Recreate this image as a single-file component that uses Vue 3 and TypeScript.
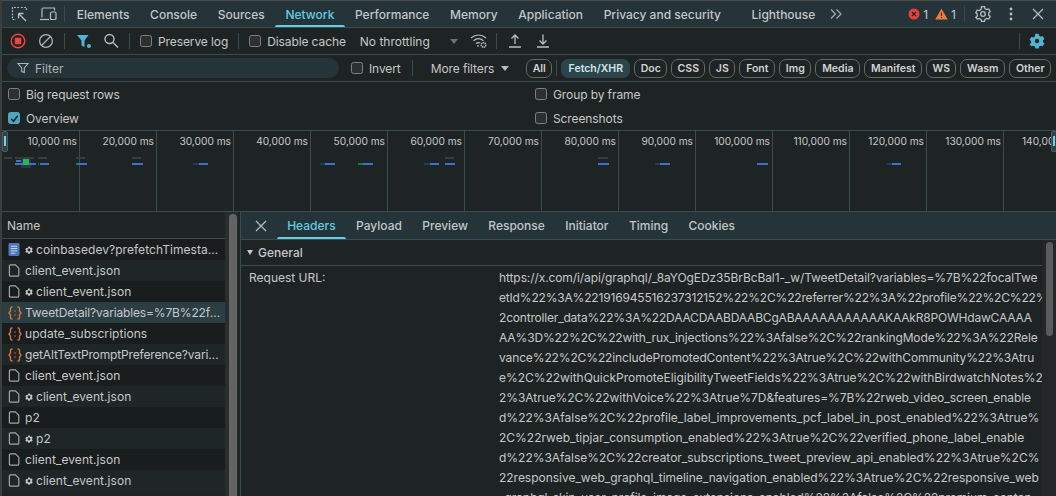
<script setup lang="ts">
const tabs = ['Elements', 'Console', 'Sources', 'Network', 'Performance', 'Memory', 'Application', 'Privacy and security', 'Lighthouse']
const chips: { label: string; w: number }[] = [
  { label: 'Fetch/XHR', w: 69 }, { label: 'Doc', w: 33 }, { label: 'CSS', w: 34 }, { label: 'JS', w: 26 },
  { label: 'Font', w: 36 }, { label: 'Img', w: 32 }, { label: 'Media', w: 45 }, { label: 'Manifest', w: 58 },
  { label: 'WS', w: 30 }, { label: 'Wasm', w: 45 }, { label: 'Other', w: 42 },
]
const ticks = ['10,000 ms', '20,000 ms', '30,000 ms', '40,000 ms', '50,000 ms', '60,000 ms', '70,000 ms', '80,000 ms', '90,000 ms', '100,000 ms', '110,000 ms', '120,000 ms', '130,000 ms', '140,000 ms']

interface Bar { x: number; y: number; w: number; h: number; c: string }
const blue = '#3f6fd0'
const navy = '#25395f'
const gray = '#3a3d3e'
const green = '#1c7a3c'
const bars: Bar[] = [
  { x: 21, y: 157, w: 10, h: 11, c: '#2f3a3c' },
  { x: 4, y: 157, w: 8, h: 2, c: gray }, { x: 15, y: 157, w: 6, h: 2, c: gray }, { x: 24, y: 157, w: 10, h: 2, c: gray }, { x: 38, y: 157, w: 9, h: 2, c: gray },
  { x: 76, y: 157, w: 9, h: 2, c: gray }, { x: 132, y: 157, w: 9, h: 2, c: gray }, { x: 445, y: 157, w: 9, h: 2, c: gray }, { x: 598, y: 157, w: 10, h: 2, c: gray },
  { x: 16, y: 160, w: 5, h: 2, c: blue }, { x: 15, y: 163, w: 21, h: 2, c: blue }, { x: 23, y: 159, w: 6, h: 6, c: '#28b45a' },
  { x: 38, y: 163, w: 1, h: 2, c: green }, { x: 40, y: 163, w: 9, h: 2, c: blue },
  { x: 76, y: 163, w: 2, h: 2, c: green }, { x: 78, y: 163, w: 9, h: 2, c: blue },
  { x: 132, y: 163, w: 11, h: 2, c: blue },
  { x: 193, y: 163, w: 6, h: 2, c: navy }, { x: 199, y: 163, w: 9, h: 2, c: blue },
  { x: 320, y: 163, w: 5, h: 2, c: navy }, { x: 325, y: 163, w: 10, h: 2, c: blue },
  { x: 358, y: 163, w: 5, h: 2, c: green }, { x: 363, y: 163, w: 10, h: 2, c: blue },
  { x: 424, y: 163, w: 6, h: 2, c: navy }, { x: 430, y: 163, w: 9, h: 2, c: blue }, { x: 445, y: 163, w: 10, h: 2, c: blue },
  { x: 598, y: 163, w: 11, h: 2, c: blue },
  { x: 655, y: 163, w: 5, h: 2, c: navy }, { x: 660, y: 163, w: 10, h: 2, c: blue },
  { x: 757, y: 163, w: 11, h: 2, c: blue },
  { x: 886, y: 163, w: 6, h: 2, c: navy }, { x: 892, y: 163, w: 9, h: 2, c: blue },
]

type Kind = 'doc' | 'file' | 'json'
interface Row { kind: Kind; gear: boolean; name: string; sel?: boolean; tight?: boolean }
const rows: Row[] = [
  { kind: 'doc', gear: true, name: 'coinbasedev?prefetchTimestamp=17' },
  { kind: 'file', gear: false, name: 'client_event.json' },
  { kind: 'file', gear: true, name: 'client_event.json' },
  { kind: 'json', gear: false, name: 'TweetDetail?variables=%7B%22focalTweetId', sel: true, tight: true },
  { kind: 'json', gear: false, name: 'update_subscriptions' },
  { kind: 'json', gear: false, name: 'getAltTextPromptPreference?variables=%7B', tight: true },
  { kind: 'file', gear: false, name: 'client_event.json' },
  { kind: 'file', gear: true, name: 'client_event.json' },
  { kind: 'file', gear: false, name: 'p2' },
  { kind: 'file', gear: true, name: 'p2' },
  { kind: 'file', gear: false, name: 'client_event.json' },
  { kind: 'file', gear: true, name: 'client_event.json' },
]

const subTabs = ['Headers', 'Payload', 'Preview', 'Response', 'Initiator', 'Timing', 'Cookies']

const urlLines: { text: string; ls: number }[] = [
  { text: 'https://x.com/i/api/graphql/_8aYOgEDz35BrBcBal1-_w/TweetDetail?variables=%7B%22focalTwe', ls: -0.094 },
  { text: 'etId%22%3A%221916945516237312152%22%2C%22referrer%22%3A%22profile%22%2C%22%2', ls: -0.177 },
  { text: '2controller_data%22%3A%22DAACDAABDAABCgABAAAAAAAAAAAKAAkR8POWHdawCAAAA', ls: -0.19 },
  { text: 'AA%3D%22%2C%22with_rux_injections%22%3Afalse%2C%22rankingMode%22%3A%22Rele', ls: -0.127 },
  { text: 'vance%22%2C%22includePromotedContent%22%3Atrue%2C%22withCommunity%22%3Atru', ls: -0.127 },
  { text: 'e%2C%22withQuickPromoteEligibilityTweetFields%22%3Atrue%2C%22withBirdwatchNotes%2', ls: -0.035 },
  { text: '2%3Atrue%2C%22withVoice%22%3Atrue%7D&features=%7B%22rweb_video_screen_enable', ls: -0.06 },
  { text: 'd%22%3Afalse%2C%22profile_label_improvements_pcf_label_in_post_enabled%22%3Atrue%', ls: 0 },
  { text: '2C%22rweb_tipjar_consumption_enabled%22%3Atrue%2C%22verified_phone_label_enable', ls: -0.01 },
  { text: 'd%22%3Afalse%2C%22creator_subscriptions_tweet_preview_api_enabled%22%3Atrue%2C%', ls: -0.02 },
  { text: '22responsive_web_graphql_timeline_navigation_enabled%22%3Atrue%2C%22responsive_web', ls: -0.024 },
  { text: '_graphql_skip_user_profile_image_extensions_enabled%22%3Afalse%2C%22premium_conten', ls: -0.06 },
]
</script>

<template>
  <div class="app">
    <!-- main tab bar -->
    <header class="tabbar">
      <svg class="ic i-inspect" width="18" height="18" viewBox="0 0 18 18" fill="none" stroke="#b9bdbe" stroke-width="1.2">
        <path d="M9 2.500H2.500V14.500H6" stroke-dasharray="1.800 1.300"/>
        <path d="M11 2.500H16.500V6" stroke-dasharray="1.800 1.300"/>
        <path d="M8.500 8.500l7.500 7.500M8.500 8.500h5M8.500 8.500v5" stroke-width="1.300"/>
      </svg>
      <svg class="ic i-device" width="18" height="18" viewBox="0 0 18 18" fill="none" stroke="#b9bdbe" stroke-width="1.200">
        <path d="M3 12.500V4.200A1.200 1.200 0 0 1 4.200 3H15.500V5.500"/>
        <path d="M1 14.500h9"/>
        <rect x="11.500" y="7" width="5.500" height="7.500" rx="1"/>
      </svg>
      <i class="sep top-sep"></i>
      <nav class="tabs">
        <a v-for="t in tabs" :key="t" class="tab" :class="{ active: t === 'Network', last: t === 'Lighthouse' }">{{ t }}</a>
      </nav>
      <svg class="more" width="14" height="12" viewBox="0 0 14 12" fill="none" stroke="#a9adae" stroke-width="1.200"><path d="M2 1.500L6.500 6 2 10.500M7.500 1.500L12 6l-4.500 4.500"/></svg>
      <div class="counts">
        <svg width="12" height="12" viewBox="0 0 12 12"><circle cx="6" cy="6" r="5.500" fill="#e5403a"/><path d="M4 4l4 4M8 4l-4 4" stroke="#3a1513" stroke-width="1.300"/></svg>
        <span class="cnt">1</span>
        <svg class="warn" width="13" height="12" viewBox="0 0 13 12"><path d="M6.500.8L12.800 11.500H.2z" fill="#ee7b3c"/><path d="M6.500 4.500v3.500M6.500 9v1" stroke="#4a2410" stroke-width="1.100"/></svg>
        <span class="cnt">1</span>
      </div>
      <i class="sep end-sep"></i>
      <svg class="ic" width="18" height="18" viewBox="0 0 18 18" fill="none" stroke="#b9bdbe" stroke-width="1.300"><path d="M7.500 2h3l.5 2 1.700 1 2-.6 1.500 2.600-1.500 1.400v2l1.500 1.400-1.500 2.600-2-.6-1.700 1-.5 2h-3l-.5-2-1.700-1-2 .6L1.800 12.800l1.500-1.400v-2L1.800 8l1.500-2.600 2 .6L7 5z" transform="translate(0 -.4)"/><circle cx="9" cy="9" r="2.300"/></svg>
      <svg class="dots" width="4" height="14" viewBox="0 0 4 14" fill="#b9bdbe"><circle cx="2" cy="2" r="1.400"/><circle cx="2" cy="7" r="1.400"/><circle cx="2" cy="12" r="1.400"/></svg>
      <svg class="close" width="12" height="12" viewBox="0 0 12 12" stroke="#b9bdbe" stroke-width="1.200"><path d="M1 1l10 10M11 1L1 11"/></svg>
    </header>

    <!-- action toolbar -->
    <section class="toolbar">
      <svg class="t-rec" width="16" height="16" viewBox="0 0 16 16"><circle cx="8" cy="8" r="6.800" fill="none" stroke="#ee4540" stroke-width="1.400"/><rect x="4.800" y="4.800" width="6.400" height="6.400" rx="1" fill="#ee4540"/></svg>
      <svg class="t-clear" width="16" height="16" viewBox="0 0 16 16" fill="none" stroke="#b0b4b5" stroke-width="1.300"><circle cx="8" cy="8" r="6.400"/><path d="M3.500 12.500l9-9"/></svg>
      <i class="sep s1"></i>
      <svg class="t-filter" width="16" height="16" viewBox="0 0 16 16"><path d="M1 2h11.500L8.500 7.500V14L5.500 12.500V7.500z" fill="#4fb6d0"/><circle cx="13" cy="13" r="2" fill="#4fb6d0"/></svg>
      <svg class="t-search" width="16" height="16" viewBox="0 0 16 16" fill="none" stroke="#b9bdbe" stroke-width="1.400"><circle cx="6.500" cy="6" r="4.500"/><path d="M10 9.500l5 5"/></svg>
      <i class="sep s2"></i>
      <label class="check c-pres"><span class="box"></span>Preserve log</label>
      <i class="sep s3"></i>
      <label class="check c-dis"><span class="box"></span>Disable cache</label>
      <span class="throttle">No throttling</span>
      <i class="caret dim"></i>
      <svg class="t-wifi" width="18" height="16" viewBox="0 0 18 16" fill="none" stroke="#b9bdbe" stroke-width="1.200"><path d="M1 5c4.500-4 10.500-4 15 0M3.500 7.800c3-2.600 7-2.600 10 0M6 10.500c1.500-1.200 3-1.200 4.200-.4"/><circle cx="8" cy="12.800" r=".9" fill="#b9bdbe" stroke="none"/><circle cx="13.500" cy="12" r="2.300" stroke-width="1.400" stroke-dasharray="1.300 .5"/></svg>
      <i class="sep s4"></i>
      <svg class="t-up" width="16" height="16" viewBox="0 0 16 16" fill="none" stroke="#b9bdbe" stroke-width="1.300"><path d="M8 11V2M4.500 5.500L8 2l3.500 3.500M2 14h12"/></svg>
      <svg class="t-down" width="16" height="16" viewBox="0 0 16 16" fill="none" stroke="#b9bdbe" stroke-width="1.300"><path d="M8 1.500V11M4.500 7.500L8 11l3.500-3.500M2 14h12"/></svg>
      <i class="sep s5"></i>
      <svg class="t-gear" width="16" height="16" viewBox="0 0 16 16"><path fill="#4fb6d0" fill-rule="evenodd" d="M6.300.8h3.400l.4 2 1.600.9 2-.6 1.700 2.900-1.500 1.300v1.800l1.500 1.300-1.700 2.900-2-.6-1.600.9-.4 2H6.300l-.4-2-1.600-.9-2 .6L.6 11.200l1.500-1.300V8.100L.6 6.800l1.700-2.900 2 .6 1.600-.9zM8 5.800a2.200 2.200 0 1 0 0 4.400 2.200 2.200 0 0 0 0-4.400z"/></svg>
    </section>

    <!-- filter row -->
    <section class="filterbar">
      <div class="filter-input">
        <svg width="12" height="12" viewBox="0 0 12 12" fill="none" stroke="#b0b4b5" stroke-width="1.100"><path d="M1 1.500h10L7.300 6v4.500L4.700 9.500V6z"/></svg>
        <span>Filter</span>
      </div>
      <label class="check c-inv"><span class="box"></span>Invert</label>
      <i class="sep s6"></i>
      <span class="morefilters">More filters</span>
      <i class="caret"></i>
      <span class="chip chip-all">All</span>
      <i class="sep s7"></i>
      <span v-for="c in chips" :key="c.label" class="chip" :class="{ on: c.label === 'Fetch/XHR' }" :style="{ width: c.w + 'px' }">{{ c.label }}</span>
    </section>

    <!-- options -->
    <section class="options">
      <label class="check"><span class="box"></span>Big request rows</label>
      <label class="check"><span class="box"></span>Group by frame</label>
      <label class="check"><span class="box checked"><svg width="11" height="11" viewBox="0 0 11 11" fill="none" stroke="#12262c" stroke-width="1.600"><path d="M2.200 5.800l2.300 2.400 4.300-5.400"/></svg></span>Overview</label>
      <label class="check"><span class="box"></span>Screenshots</label>
    </section>

    <!-- overview timeline -->
    <section class="overview">
      <div v-for="t in ticks" :key="t" class="tick"><span>{{ t }}</span></div>
      <i v-for="(b, i) in bars" :key="i" class="bar" :style="{ left: b.x + 'px', top: (b.y - 131) + 'px', width: b.w + 'px', height: b.h + 'px', background: b.c }"></i>
      <i class="handle h-left"></i>
      <i class="handle h-right"></i>
    </section>

    <!-- split -->
    <section class="split">
      <div class="list">
        <div class="list-main">
          <div class="list-head">Name</div>
          <div v-for="(r, i) in rows" :key="i" class="row" :class="{ alt: i % 2 === 1, sel: r.sel, tight: r.tight }">
            <svg v-if="r.kind === 'doc'" class="ricon" width="12" height="13" viewBox="0 0 13 14"><rect x=".5" y="0" width="12" height="14" rx="1.500" fill="#4d74bd"/><path d="M3 3.500h7M3 6h7M3 8.500h7M3 11h5" stroke="#d3e0f5" stroke-width="1"/></svg>
            <svg v-else-if="r.kind === 'file'" class="ricon" width="12" height="13" viewBox="0 0 13 14" fill="none" stroke="#a2a6a7" stroke-width="1.300"><path d="M1.500 2A1.200 1.200 0 0 1 2.700.8H8L11.700 4.500V12a1.200 1.200 0 0 1-1.200 1.200H2.700A1.200 1.200 0 0 1 1.500 12z"/></svg>
            <svg v-else class="ricon json" width="14" height="14" viewBox="0 0 14 14" fill="none" stroke="#e0743e" stroke-width="1.300"><path d="M4.500 1H3.800A1.300 1.300 0 0 0 2.500 2.300V5L1 7l1.500 2v2.700A1.300 1.300 0 0 0 3.800 13h.7M9.500 1h.7a1.300 1.300 0 0 1 1.300 1.300V5L13 7l-1.500 2v2.700a1.300 1.300 0 0 1-1.300 1.300h-.7"/><path d="M7 4.500v1M7 8.500v1" stroke-width="1.500"/></svg>
            <svg v-if="r.gear" class="rgear" width="8" height="8" viewBox="0 0 16 16"><path fill="#c4c8c9" fill-rule="evenodd" d="M6.300.8h3.400l.4 2 1.600.9 2-.6 1.700 2.900-1.500 1.300v1.800l1.500 1.300-1.700 2.900-2-.6-1.600.9-.4 2H6.300l-.4-2-1.600-.9-2 .6L.6 11.200l1.500-1.300V8.100L.6 6.800l1.700-2.900 2 .6 1.600-.9zM8 5.200a2.800 2.800 0 1 0 0 5.600 2.800 2.800 0 0 0 0-5.600z"/></svg>
            <span class="rname">{{ r.name }}</span>
          </div>
        </div>
        <div class="vscroll"><i></i></div>
      </div>

      <div class="detail">
        <nav class="subtabs">
          <svg class="subclose" width="12" height="12" viewBox="0 0 12 12" stroke="#b9bdbe" stroke-width="1.200"><path d="M1 1l10 10M11 1L1 11"/></svg>
          <a v-for="s in subTabs" :key="s" class="subtab" :class="{ active: s === 'Headers' }">{{ s }}</a>
        </nav>
        <div class="detail-body">
          <div class="detail-main">
            <div class="section-head"><i class="tri"></i>General</div>
            <div class="kv">
              <span class="key">Request URL:</span>
              <div class="val">
                <div v-for="(l, i) in urlLines" :key="i" class="line" :style="{ letterSpacing: l.ls + 'px' }">{{ l.text }}</div>
              </div>
            </div>
          </div>
          <div class="dscroll"><i></i></div>
        </div>
      </div>
    </section>
  </div>
</template>

<style scoped>
.app {
  width: 1056px;
  height: 496px;
  overflow: hidden;
  background: #1e2324;
  color: #c6c8c9;
  font-family: Inter, "Liberation Sans", sans-serif;
  font-size: 12px;
  border-left: 2px solid #3b3e3f;
  border-top: 1px solid #4a4c4d;
  box-sizing: border-box;
  display: flex;
  flex-direction: column;
}
svg { display: block; flex: none; }
.sep { display: block; width: 1px; height: 16px; background: #3c4a4e; flex: none; }

.tabbar {
  flex: none;
  background: #243439;
  border-bottom: 1px solid #3b4c51;
  display: flex;
  align-items: center;
  height: 26px;
  padding-left: 8px;
}
.i-device { margin-left: 11px; }
.top-sep { margin-left: 7px; }
.tabs { display: flex; height: 100%; margin-left: 1.500px; }
.tab {
  display: flex;
  align-items: center;
  justify-content: center;
  padding: 0 10.300px;
  font-weight: 500;
  white-space: nowrap;
  color: #c2c6c7;
  position: relative;
}
.tab.last { margin-left: 10px; }
.tab.active { color: #62cde3; }
.tab.active::after {
  content: '';
  position: absolute;
  left: 0;
  right: 0;
  bottom: 0;
  height: 2px;
  border-radius: 2px 2px 0 0;
  background: #62cde3;
}
.more { margin-left: 3px; }
.counts { margin-left: auto; display: flex; align-items: center; }
.cnt { margin-left: 3px; }
.warn { margin-left: 7px; }
.end-sep { margin-left: 8px; }
.end-sep + svg { margin-left: 9px; }
.dots { margin-left: 17px; }
.close { margin-left: 19px; margin-right: 12px; }

.toolbar {
  flex: none;
  height: 26px;
  border-bottom: 1px solid #3b4c51;
  display: flex;
  align-items: center;
  padding-left: 8px;
}
.t-clear { margin-left: 12px; }
.s1 { margin-left: 10px; }
.t-filter { margin-left: 11px; }
.t-search { margin-left: 11px; }
.s2 { margin-left: 10px; }
.c-pres { margin-left: 10px; }
.s3 { margin-left: 10px; }
.c-dis { margin-left: 10px; }
.throttle { margin-left: 14px; white-space: nowrap; }
.caret { display: block; flex: none; width: 0; height: 0; border: 4px solid transparent; border-top: 5px solid #b9bdbe; border-bottom: 0; }
.caret.dim { border-top-color: #6d7273; margin-left: 20px; }
.t-wifi { margin-left: 12px; }
.s4 { margin-left: 8px; }
.t-up { margin-left: 10px; }
.t-down { margin-left: 12px; }
.s5 { margin-left: auto; }
.t-gear { margin-left: 9px; margin-right: 11px; }

.check { display: flex; align-items: center; gap: 6px; white-space: nowrap; letter-spacing: -.1px; }
.box {
  width: 10px;
  height: 10px;
  border: 1px solid #7d8182;
  border-radius: 2.500px;
  background: #2d2f30;
  flex: none;
  display: flex;
  align-items: center;
  justify-content: center;
}
.box.checked { background: #4ca7bf; border-color: #4ca7bf; }

.filterbar {
  flex: none;
  height: 26px;
  border-bottom: 1px solid #3b4c51;
  display: flex;
  align-items: center;
  padding-left: 5px;
}
.filter-input {
  width: 332px;
  height: 20px;
  border-radius: 10px;
  background: #243439;
  display: flex;
  align-items: center;
  gap: 6px;
  padding-left: 10px;
  box-sizing: border-box;
  color: #aeb2b3;
  flex: none;
}
.c-inv { margin-left: 12px; }
.s6 { margin-left: 11px; }
.morefilters { margin-left: 18px; white-space: nowrap; letter-spacing: -.1px; }
.filterbar .caret { margin-left: 7px; }
.chip {
  height: 19px;
  border: 1px solid #63696b;
  border-radius: 7px;
  box-sizing: border-box;
  display: flex;
  align-items: center;
  justify-content: center;
  font-size: 10.500px;
  font-weight: 600;
  margin-left: 4px;
  color: #d0d3d4;
  flex: none;
}
.chip-all { margin-left: 17px; width: 26px; }
.s7 { margin-left: 4px; }
.chip.on { background: #2c454c; border-color: #2c454c; color: #d3e6ea; }

.options {
  flex: none;
  height: 48px;
  display: grid;
  grid-template-columns: 527px 1fr;
  grid-auto-rows: 24px;
  padding-left: 6px;
  align-items: center;
}

.overview {
  flex: none;
  height: 80px;
  border-top: 1px solid #3b4c51;
  border-bottom: 1px solid #3b4c51;
  display: flex;
  position: relative;
  overflow: hidden;
  padding-left: 1px;
}
.tick {
  flex: none;
  width: 77px;
  box-sizing: border-box;
  border-right: 1px solid #3b4c51;
  display: flex;
  justify-content: flex-end;
  padding: 4px 2px 0 0;
  font-size: 10.200px;
  white-space: nowrap;
}
.tick span { display: block; }
.bar { position: absolute; display: block; margin-left: -2px; }
.handle {
  position: absolute;
  top: 0;
  width: 4px;
  height: 19px;
  background: #2e4248;
  border: 1px solid #4a5d62;
  border-radius: 2px;
  display: block;
}
.h-left { left: 0; }
.h-right { right: -1px; }
.handle::after { content: ''; position: absolute; left: 1px; top: 4px; width: 1.500px; height: 10px; background: #6fd6ea; }

.split { flex: 1; min-height: 0; display: flex; }
.list { width: 236px; padding-right: 2px; flex: none; display: flex; border-right: 1px solid #3b4c51; overflow: hidden; }
.list-main { width: 223px; flex: none; overflow: hidden; }
.list-head {
  height: 26px;
  border-bottom: 1px solid #3b4c51;
  display: flex;
  align-items: center;
  padding-left: 5px;
}
.row {
  height: 21px;
  display: flex;
  align-items: center;
  padding-left: 6px;
  background: #191d1e;
  white-space: nowrap;
}
.row.alt { background: #1e2628; }
.row.sel { background: #2b3e43; }
.ricon { margin-right: 5px; }
.ricon.json { margin-right: 3px; }
.rgear { margin-right: 3px; }
.rname { overflow: hidden; text-overflow: ellipsis; min-width: 0; padding-right: 3px; letter-spacing: .05px; }
.row.tight .rname { letter-spacing: -.15px; }
.vscroll { width: 13px; flex: none; background: #2a2d2e; position: relative; }
.vscroll i { display: block; position: absolute; left: 4px; top: 2px; bottom: 0; width: 8px; border-radius: 4px 4px 0 0; background: #636565; }

.detail { flex: 1; min-width: 0; display: flex; flex-direction: column; }
.subtabs {
  flex: none;
  background: #243439;
  border-bottom: 1px solid #3b4c51;
  display: flex;
  align-items: stretch;
  padding-left: 14px;
  height: 27px;
}
.subclose { align-self: center; margin-right: 10px; }
.subtab { display: flex; align-items: center; padding: 0 10.200px; font-weight: 500; position: relative; color: #c2c6c7; }
.subtab.active { color: #62cde3; }
.subtab.active::after { content: ''; position: absolute; left: 0; right: 0; bottom: 0; height: 2px; border-radius: 2px 2px 0 0; background: #62cde3; }
.detail-body { flex: 1; min-height: 0; display: flex; }
.detail-main { flex: 1; min-width: 0; overflow: hidden; }
.section-head {
  height: 25px;
  border-bottom: 1px solid #3b4c51;
  display: flex;
  align-items: center;
  padding-left: 6px;
  font-weight: 500;
}
.tri { display: block; width: 0; height: 0; border: 3.500px solid transparent; border-top: 5px solid #c6c8c9; border-bottom: 0; margin-right: 5px; }
.kv { display: flex; padding: 2px 0 0 8px; }
.key { width: 250px; flex: none; line-height: 20px; }
.val { flex: 1; min-width: 0; }
.line { line-height: 20px; white-space: nowrap; }
.dscroll { width: 14px; flex: none; background: #242729; position: relative; }
.dscroll i { display: block; position: absolute; left: 4px; top: 2px; height: 94px; width: 7px; border-radius: 4px; background: #5a5c5c; }
</style>

<style>
html, body { margin: 0; background: #1e2324; }
</style>
